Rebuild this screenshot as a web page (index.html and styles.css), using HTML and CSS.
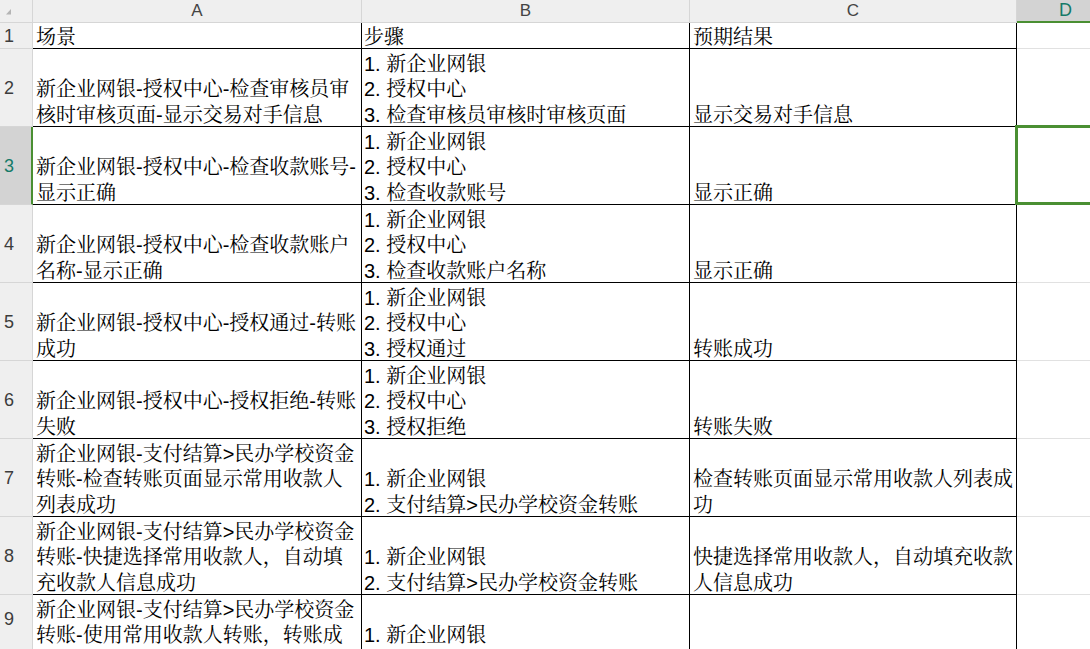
FILE: index.html
```html
<!DOCTYPE html>
<html lang="zh-CN">
<head>
<meta charset="utf-8">
<title>Sheet</title>
<link rel="stylesheet" href="styles.css">
</head>
<body>
<div class="sheet">
  <div class="row colhead">
    <div class="corner"><svg width="32" height="22" viewBox="0 0 32 22"><polygon points="6,14.5 11,14.5 11,9" fill="#b4b4b4"/></svg></div>
    <div class="ch">A</div>
    <div class="ch">B</div>
    <div class="ch">C</div>
    <div class="ch ch-sel">D</div>
  </div>

  <div class="row r-head">
    <div class="rh">1</div>
    <div class="c ca"><div>场景</div></div>
    <div class="c cb"><div>步骤</div></div>
    <div class="c cc"><div>预期结果</div></div>
    <div class="d"></div>
  </div>

  <div class="row r-tall">
    <div class="rh">2</div>
    <div class="c ca"><div>新企业网银-授权中心-检查审核员审</div><div>核时审核页面-显示交易对手信息</div></div>
    <div class="c cb"><div>1. 新企业网银</div><div>2. 授权中心</div><div>3. 检查审核员审核时审核页面</div></div>
    <div class="c cc"><div>显示交易对手信息</div></div>
    <div class="d"></div>
  </div>

  <div class="row r-tall">
    <div class="rh rh-sel">3</div>
    <div class="c ca"><div>新企业网银-授权中心-检查收款账号-</div><div>显示正确</div></div>
    <div class="c cb"><div>1. 新企业网银</div><div>2. 授权中心</div><div>3. 检查收款账号</div></div>
    <div class="c cc"><div>显示正确</div></div>
    <div class="d"><div class="sel-box"></div></div>
  </div>

  <div class="row r-tall">
    <div class="rh">4</div>
    <div class="c ca"><div>新企业网银-授权中心-检查收款账户</div><div>名称-显示正确</div></div>
    <div class="c cb"><div>1. 新企业网银</div><div>2. 授权中心</div><div>3. 检查收款账户名称</div></div>
    <div class="c cc"><div>显示正确</div></div>
    <div class="d"></div>
  </div>

  <div class="row r-tall">
    <div class="rh">5</div>
    <div class="c ca"><div>新企业网银-授权中心-授权通过-转账</div><div>成功</div></div>
    <div class="c cb"><div>1. 新企业网银</div><div>2. 授权中心</div><div>3. 授权通过</div></div>
    <div class="c cc"><div>转账成功</div></div>
    <div class="d"></div>
  </div>

  <div class="row r-tall">
    <div class="rh">6</div>
    <div class="c ca"><div>新企业网银-授权中心-授权拒绝-转账</div><div>失败</div></div>
    <div class="c cb"><div>1. 新企业网银</div><div>2. 授权中心</div><div>3. 授权拒绝</div></div>
    <div class="c cc"><div>转账失败</div></div>
    <div class="d"></div>
  </div>

  <div class="row r-tall">
    <div class="rh">7</div>
    <div class="c ca"><div>新企业网银-支付结算&gt;民办学校资金</div><div>转账-检查转账页面显示常用收款人</div><div>列表成功</div></div>
    <div class="c cb"><div>1. 新企业网银</div><div>2. 支付结算&gt;民办学校资金转账</div></div>
    <div class="c cc"><div>检查转账页面显示常用收款人列表成</div><div>功</div></div>
    <div class="d"></div>
  </div>

  <div class="row r-tall">
    <div class="rh">8</div>
    <div class="c ca"><div>新企业网银-支付结算&gt;民办学校资金</div><div>转账-快捷选择常用收款人，自动填</div><div>充收款人信息成功</div></div>
    <div class="c cb"><div>1. 新企业网银</div><div>2. 支付结算&gt;民办学校资金转账</div></div>
    <div class="c cc"><div>快捷选择常用收款人，自动填充收款</div><div>人信息成功</div></div>
    <div class="d"></div>
  </div>

  <div class="row r-cut">
    <div class="rh">9</div>
    <div class="c ca"><div>新企业网银-支付结算&gt;民办学校资金</div><div>转账-使用常用收款人转账，转账成</div></div>
    <div class="c cb"><div>1. 新企业网银</div></div>
    <div class="c cc"></div>
    <div class="d"></div>
  </div>
</div>
</body>
</html>
```

FILE: styles.css
```css
* {
  box-sizing: border-box;
}

html,
body {
  margin: 0;
  padding: 0;
  background: #ffffff;
  overflow: hidden;
}

body {
  width: 1090px;
  height: 649px;
  font-family: "Liberation Sans", "Noto Serif CJK SC", "Noto Sans CJK SC", sans-serif;
  color: #000000;
}

.sheet {
  display: flex;
  flex-direction: column;
}

.row {
  display: grid;
  grid-template-columns: 33px 329px 328px 327px 73px;
}

/* column header strip */
.colhead {
  height: 23px;
  background: #efefef;
}

.colhead > div {
  border-right: 1px solid #d6d6d6;
  border-bottom: 1px solid #d6d6d6;
  text-align: center;
  font-size: 17px;
  line-height: 21px;
  color: #444444;
}

.corner svg {
  display: block;
}

.colhead > .ch-sel {
  background: #d3d3d3;
  color: #167a68;
  border-right: none;
  border-bottom: 2px solid #4a8f32;
  text-align: left;
  padding-left: 42px;
  font-size: 18px;
}

/* rows */
.r-head {
  height: 26px;
}

.r-tall {
  height: 78px;
}

.r-cut {
  height: 56px;
}

.rh {
  background: #efefef;
  border-right: 1px solid #d6d6d6;
  border-bottom: 1px solid #d6d6d6;
  display: flex;
  align-items: center;
  padding-left: 4px;
  padding-top: 1px;
  font-size: 18px;
  color: #3c3c3c;
}

.r-cut .rh {
  align-items: flex-start;
  padding-top: 14px;
}

.rh-sel {
  background: #d3d3d3;
  color: #167a68;
  border-right: 2px solid #4a8f32;
}

.c {
  border-right: 1px solid #000000;
  border-bottom: 1px solid #000000;
  display: flex;
  flex-direction: column;
  justify-content: flex-end;
  padding-left: 3px;
  font-size: 20px;
  line-height: 25.5px;
  white-space: nowrap;
  overflow: hidden;
}

.c > div:last-child {
  margin-bottom: -2px;
}

.cb {
  padding-left: 2px;
}

.r-cut .c {
  justify-content: flex-start;
  padding-top: 2.5px;
}

.r-cut .c > div:last-child {
  margin-bottom: 0;
}

.r-cut .cb {
  padding-top: 28px;
}

.d {
  border-bottom: 1px solid #e1e1e1;
  position: relative;
}

.sel-box {
  position: absolute;
  left: -2px;
  top: -2px;
  right: -2px;
  bottom: -1px;
  border: 3px solid #4a8f32;
  border-right: none;
  z-index: 2;
}
```
